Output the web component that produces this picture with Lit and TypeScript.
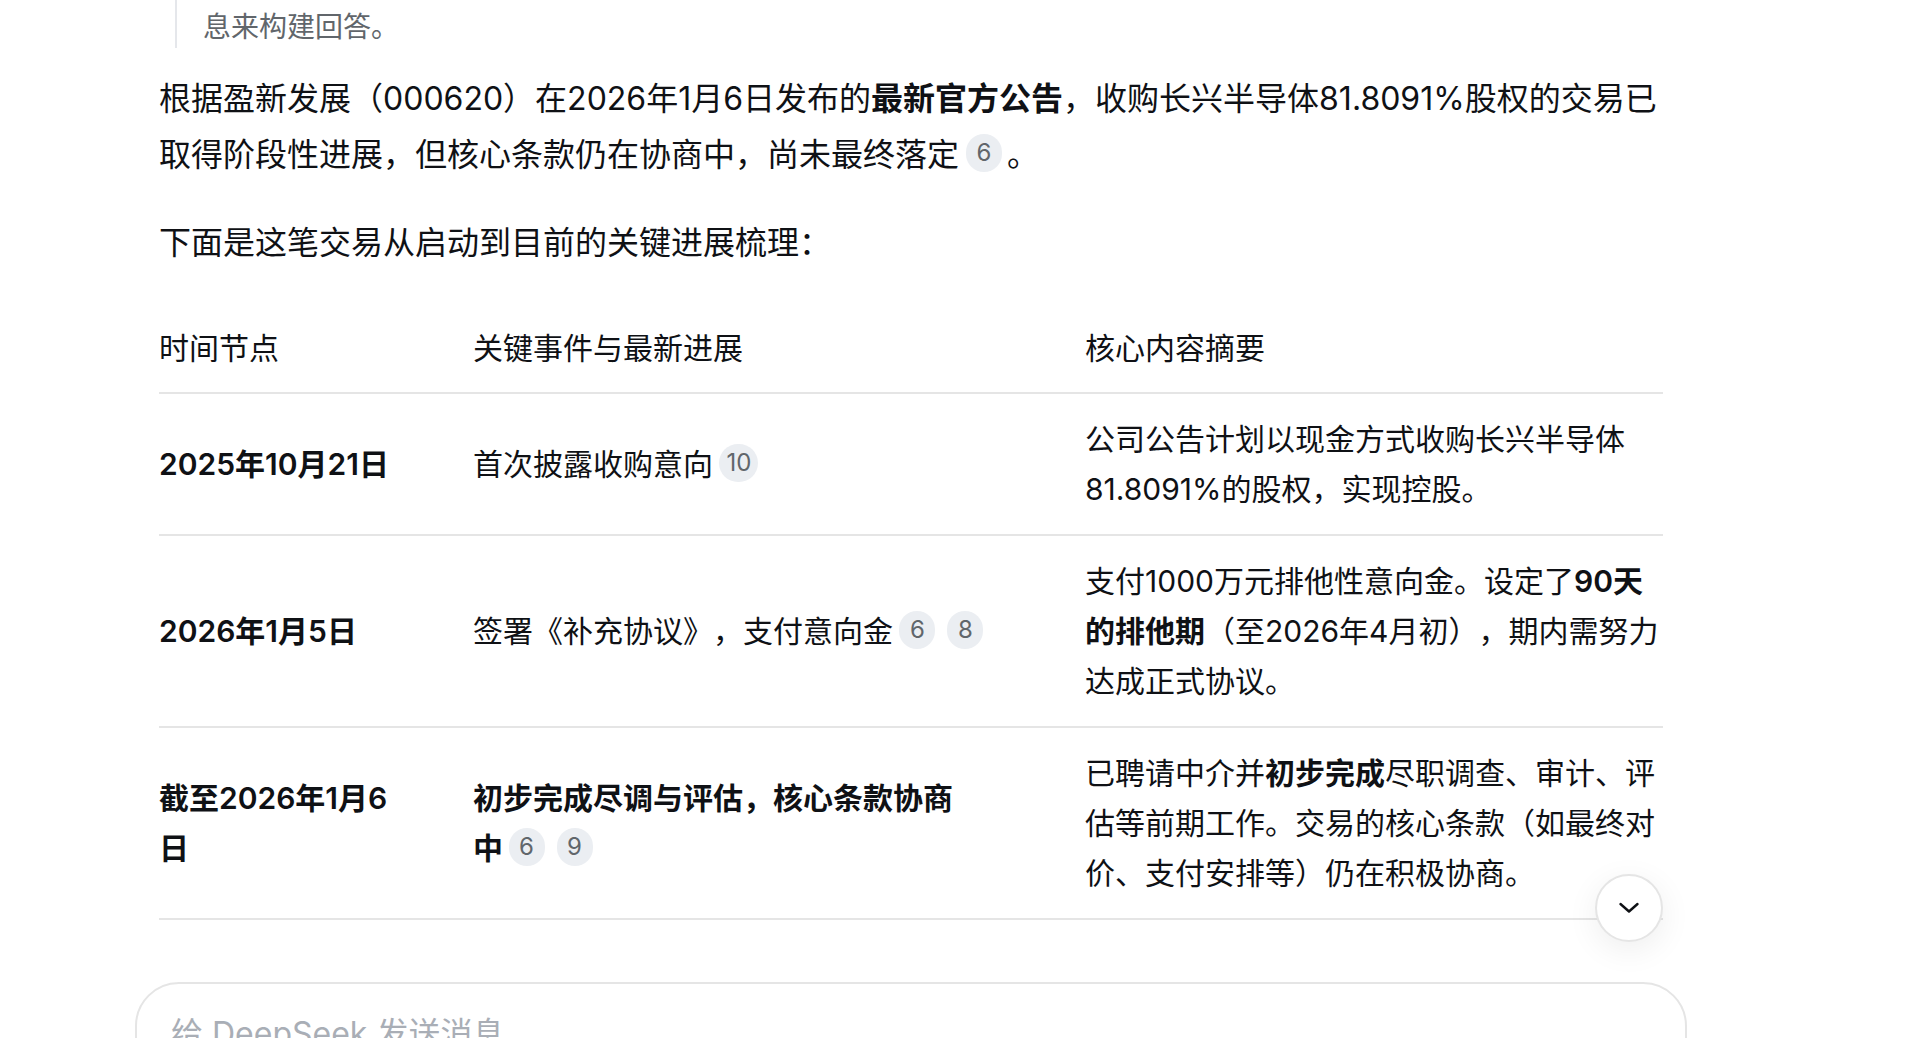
import { LitElement, html, css } from "lit";
import { customElement } from "lit/decorators.js";

const cite = (n: string) => html`<span class="cite">${n}</span>`;

@customElement("app-root")
export class AppRoot extends LitElement {
  static styles = css`
    :host {
      display: block;
      font-family: Inter, "Noto Sans CJK SC", sans-serif;
      color: #0f1115;
      text-spacing-trim: space-all;
    }
    .page {
      position: relative;
      height: 1038px;
      overflow: hidden;
      background: #fff;
      display: flex;
      flex-direction: column;
      align-items: flex-start;
    }
    .content {
      width: 1504px;
      flex: none;
      margin-left: 159px;
    }
    .quote {
      margin: 0 0 23px 16px;
      padding: 7px 0 1px 26px;
      border-left: 2px solid #e5e7eb;
      font-size: 28px;
      line-height: 40px;
      color: #61666b;
    }
    p {
      margin: 0 0 32px;
      font-size: 32px;
      line-height: 56px;
    }
    p .cite { vertical-align: 5px; margin-right: -4px; }
    b { font-weight: 600; }
    table {
      width: 100%;
      border-collapse: collapse;
      table-layout: fixed;
      font-size: 30px;
      line-height: 50px;
      margin-top: 51px;
    }
    th,
    td {
      box-sizing: border-box;
      text-align: left;
      font-weight: 400;
      padding: 20px 0;
      border-bottom: 2px solid #e5e5e5;
      vertical-align: middle;
    }
    th { padding: 1px 0 19px; }
    .c1 { width: 314px; padding-right: 60px; }
    .c2 { width: 612px; padding-right: 102px; }
    .nowrap { white-space: nowrap; }
    td.strong { font-weight: 600; }
    .cite {
      display: inline-block;
      box-sizing: border-box;
      min-width: 36px;
      height: 38px;
      padding: 0 7px;
      margin: 0 -2px 0 -2px;
      border-radius: 19px;
      background: #ebeef2;
      color: #61666b;
      font-size: 24px;
      font-weight: 400;
      line-height: 38px;
      text-align: center;
      vertical-align: 4px;
    }
    .cite + .cite { margin-left: 14px; }
    .composer {
      flex: none;
      box-sizing: border-box;
      width: 1552px;
      height: 160px;
      margin: 62px 0 0 135px;
      padding: 25px 34px;
      border: 2px solid #e5e5e5;
      border-radius: 44px;
      font-size: 32px;
      line-height: 50px;
      color: #a9aeb6;
    }
    .down {
      position: absolute;
      left: 1595px;
      top: 874px;
      box-sizing: border-box;
      width: 68px;
      height: 68px;
      display: flex;
      align-items: center;
      justify-content: center;
      background: #fff;
      border: 2px solid #e5e5e5;
      border-radius: 50%;
      box-shadow: 0 8px 32px rgba(0, 0, 0, 0.07);
    }
  `;

  render() {
    return html`
      <div class="page">
        <div class="content">
          <div class="quote">息来构建回答。</div>
          <p>根据盈新发展（000620）在2026年1月6日发布的<b>最新官方公告</b>，收购长兴半导体81.8091%股权的交易已取得阶段性进展，但核心条款仍在协商中，尚未最终落定 ${cite("6")} 。</p>
          <p>下面是这笔交易从启动到目前的关键进展梳理：</p>
          <table>
            <thead>
              <tr>
                <th class="c1">时间节点</th>
                <th class="c2">关键事件与最新进展</th>
                <th>核心内容摘要</th>
              </tr>
            </thead>
            <tbody>
              <tr>
                <td class="c1 strong">2025年10月21日</td>
                <td class="c2">首次披露收购意向 ${cite("10")}</td>
                <td>公司公告计划以现金方式收购长兴半导体81.8091%的股权，实现控股。</td>
              </tr>
              <tr>
                <td class="c1 strong">2026年1月5日</td>
                <td class="c2 nowrap">签署《补充协议》，支付意向金 ${cite("6")}${cite("8")}</td>
                <td>支付1000万元排他性意向金。设定了<b>90天的排他期</b>（至2026年4月初），期内需努力达成正式协议。</td>
              </tr>
              <tr>
                <td class="c1 strong">截至2026年1月6日</td>
                <td class="c2 strong">初步完成尽调与评估，核心条款协商<br />中 ${cite("6")}${cite("9")}</td>
                <td>已聘请中介并<b>初步完成</b>尽职调查、审计、评估等前期工作。交易的核心条款（如最终对价、支付安排等）仍在积极协商。</td>
              </tr>
            </tbody>
          </table>
        </div>
        <div class="composer">给 DeepSeek 发送消息</div>
        <div class="down">
          <svg width="24" height="24" viewBox="0 0 24 24" fill="none" stroke="#0f1115" stroke-width="2.4" stroke-linecap="round" stroke-linejoin="round"><path d="M3.5 8l8.5 7.5L20.5 8" /></svg>
        </div>
      </div>
    `;
  }
}
